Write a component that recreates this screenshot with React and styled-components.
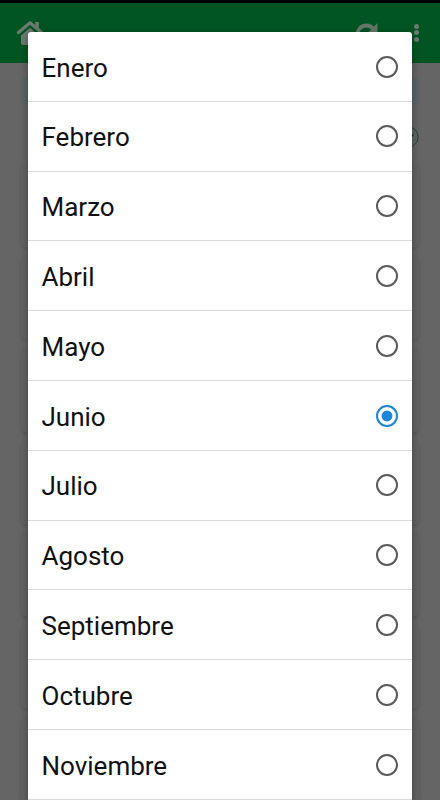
import React, { useState } from 'react';
import styled, { createGlobalStyle } from 'styled-components';

const months = [
  'Enero', 'Febrero', 'Marzo', 'Abril', 'Mayo', 'Junio',
  'Julio', 'Agosto', 'Septiembre', 'Octubre', 'Noviembre',
];

export default function App() {
  const [selected, setSelected] = useState('Junio');

  return (
    <Screen>
      <GlobalStyle />
      <StatusBar />
      <Header>
        <svg width="28" height="30" viewBox="0 0 28 30">
          <path d="M2.5 15.5 L14 5.8 L25.5 15.5" fill="none" stroke="#6c7a70" strokeWidth="3.2" strokeLinecap="round" strokeLinejoin="round" />
          <path d="M19.2 5h3.6v8l-3.6-3z" fill="#6c7a70" />
          <path d="M5 18.5 L14 10.8 L23 18.5 V26 a2 2 0 0 1-2 2 H7 a2 2 0 0 1-2-2z" fill="#6c7a70" />
        </svg>
        <Actions>
          <svg width="24" height="24" viewBox="0 0 24 24">
            <path d="M18.5 7 A9 9 0 1 0 20 15" fill="none" stroke="#66776b" strokeWidth="3.8" />
            <path d="M22.5 1v10h-10z" fill="#66776b" />
          </svg>
          <Dots><i /><i /><i /></Dots>
        </Actions>
      </Header>
      <Content>
        <Banner />
        <Filter>
          <svg width="22" height="22" viewBox="0 0 22 22">
            <circle cx="11" cy="11" r="10.2" fill="#5d6565" stroke="#343b3b" />
            <path d="M6 9l5 5 5.5-5.5" fill="none" stroke="#222" strokeWidth="1.3" />
          </svg>
        </Filter>
        {[1, 2, 3, 4, 5, 6, 7].map((n) => <Card key={n} />)}
      </Content>
      <Dialog role="radiogroup">
        {months.map((month) => (
          <Option key={month} role="radio" aria-checked={month === selected} onClick={() => setSelected(month)}>
            <span>{month}</span>
            <Radio $checked={month === selected} />
          </Option>
        ))}
      </Dialog>
    </Screen>
  );
}

const GlobalStyle = createGlobalStyle`
  body {
    margin: 0;
    overflow: hidden;
  }
  * {
    box-sizing: border-box;
  }
`;

const Screen = styled.div`
  position: relative;
  width: 440px;
  height: 800px;
  overflow: hidden;
  background: #656565;
  font-family: Roboto, "Liberation Sans", sans-serif;
`;

const StatusBar = styled.div`
  height: 3px;
  background: #000;
`;

const Header = styled.header`
  display: flex;
  justify-content: space-between;
  align-items: flex-start;
  height: 60px;
  padding: 14px 21px 0 16px;
  background: #005522;
`;

const Actions = styled.div`
  display: flex;
  align-items: flex-start;
  gap: 35px;
  padding-top: 5px;
`;

const Dots = styled.div`
  display: flex;
  flex-direction: column;
  gap: 1.6px;
  padding-top: 1.6px;

  i {
    width: 5px;
    height: 5px;
    border-radius: 50%;
    background: #6c7a70;
  }
`;

const Content = styled.main`
  display: flex;
  flex-direction: column;
  padding: 15px 21px 0;
`;

const Banner = styled.div`
  height: 26px;
  border-radius: 3px;
  background: #5a6565;
`;

const Filter = styled.div`
  display: flex;
  justify-content: flex-end;
  height: 60px;
  padding-top: 21.5px;
`;

const Card = styled.div`
  flex: none;
  height: 84px;
  margin-bottom: 8.3px;
  border-radius: 6px;
  background: #636363;
  box-shadow: 0 1px 3px rgba(0, 0, 0, 0.13);
`;

const Dialog = styled.div`
  position: absolute;
  top: 32px;
  bottom: 0;
  left: 28px;
  width: 384px;
  border-radius: 3px 3px 0 0;
  background: #fff;
  box-shadow: 0 2px 8px rgba(0, 0, 0, 0.35);
`;

const Option = styled.div`
  display: flex;
  justify-content: space-between;
  align-items: center;
  height: 69.8px;
  padding: 0.4px 14px 0 13.5px;
  border-bottom: 1px solid #d9d9d9;
  color: #111;
  font-size: 26px;
  line-height: 30px;
  cursor: pointer;

  span {
    padding-top: 2px;
  }
`;

const Radio = styled.div`
  width: 22px;
  height: 22px;
  border: 2px solid ${(props) => (props.$checked ? '#1c86d1' : '#5a5a5a')};
  border-radius: 50%;
  background: ${(props) => (props.$checked ? 'radial-gradient(circle, #1c86d8 5px, #fff 5.8px)' : '#fff')};
`;
